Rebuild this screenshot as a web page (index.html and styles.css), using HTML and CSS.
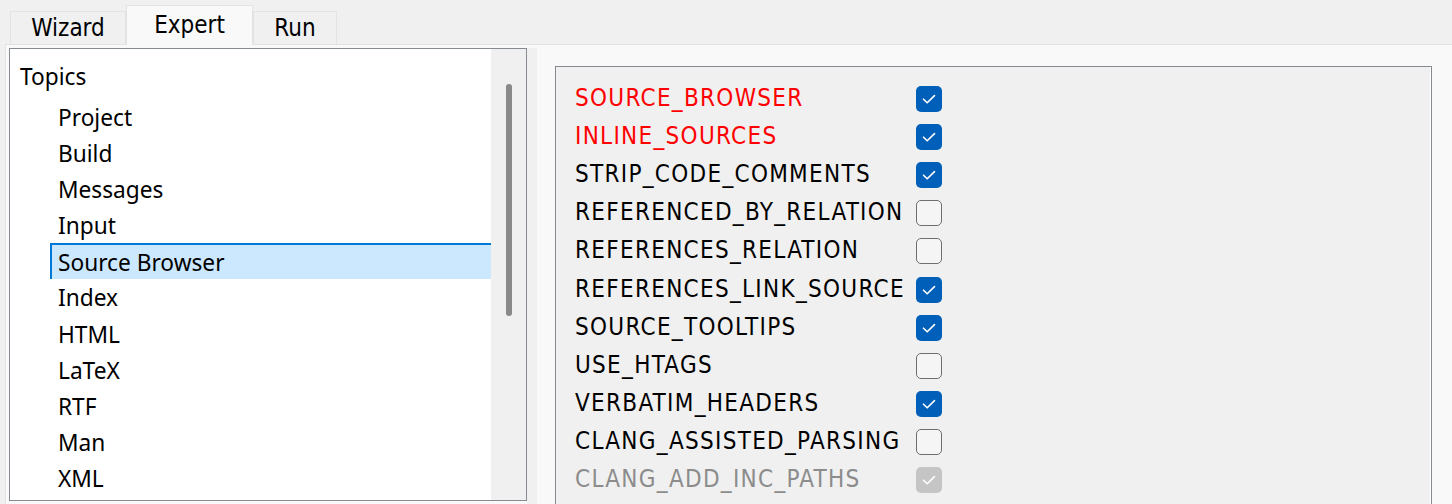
FILE: index.html
```html
<!DOCTYPE html>
<html>
<head>
<meta charset="utf-8">
<link rel="stylesheet" href="styles.css">
</head>
<body>
<div class="tabbar">
  <div class="tab">Wizard</div>
  <div class="tab active">Expert</div>
  <div class="tab">Run</div>
</div>
<div class="page">
  <div class="leftpane">
    <div class="listbox">
      <div class="list">
        <div class="topics">Topics</div>
        <div class="children">
          <div class="item">Project</div>
          <div class="item">Build</div>
          <div class="item">Messages</div>
          <div class="item">Input</div>
          <div class="item selected">Source Browser</div>
          <div class="item">Index</div>
          <div class="item">HTML</div>
          <div class="item">LaTeX</div>
          <div class="item">RTF</div>
          <div class="item">Man</div>
          <div class="item">XML</div>
        </div>
      </div>
      <div class="scrollbar"><div class="thumb"></div></div>
    </div>
    <div class="handle"></div>
  </div>
  <div class="rightpane">
    <div class="panel">
      <div class="opt red">SOURCE_BROWSER</div><div class="cb on"><svg viewBox="0 0 26 26"><path d="M7.5 13.2 L11.2 16.8 L18.5 9.6"/></svg></div>
      <div class="opt red">INLINE_SOURCES</div><div class="cb on"><svg viewBox="0 0 26 26"><path d="M7.5 13.2 L11.2 16.8 L18.5 9.6"/></svg></div>
      <div class="opt">STRIP_CODE_COMMENTS</div><div class="cb on"><svg viewBox="0 0 26 26"><path d="M7.5 13.2 L11.2 16.8 L18.5 9.6"/></svg></div>
      <div class="opt">REFERENCED_BY_RELATION</div><div class="cb off"></div>
      <div class="opt">REFERENCES_RELATION</div><div class="cb off"></div>
      <div class="opt">REFERENCES_LINK_SOURCE</div><div class="cb on"><svg viewBox="0 0 26 26"><path d="M7.5 13.2 L11.2 16.8 L18.5 9.6"/></svg></div>
      <div class="opt">SOURCE_TOOLTIPS</div><div class="cb on"><svg viewBox="0 0 26 26"><path d="M7.5 13.2 L11.2 16.8 L18.5 9.6"/></svg></div>
      <div class="opt">USE_HTAGS</div><div class="cb off"></div>
      <div class="opt">VERBATIM_HEADERS</div><div class="cb on"><svg viewBox="0 0 26 26"><path d="M7.5 13.2 L11.2 16.8 L18.5 9.6"/></svg></div>
      <div class="opt">CLANG_ASSISTED_PARSING</div><div class="cb off"></div>
      <div class="opt dis">CLANG_ADD_INC_PATHS</div><div class="cb disabled"><svg viewBox="0 0 26 26"><path d="M7.5 13.2 L11.2 16.8 L18.5 9.6"/></svg></div>
    </div>
  </div>
</div>
</body>
</html>
```
FILE: styles.css
```css
html, body {
  margin: 0;
  padding: 0;
  height: 504px;
  overflow: hidden;
  background: #f0f0f0;
}

.tabbar {
  display: flex;
  align-items: flex-end;
  height: 44px;
  padding-left: 10px;
  font-family: "DejaVu Sans Condensed", "DejaVu Sans", sans-serif;
  font-size: 24px;
  color: #000;
}

.tab {
  box-sizing: border-box;
  height: 33px;
  border: 1px solid #e3e3e3;
  border-bottom: none;
  background: #f0f0f0;
  display: flex;
  align-items: center;
  justify-content: center;
  line-height: 1;
}

.tab:nth-child(1) { width: 116px; }
.tab:nth-child(3) { width: 84px; }

.tab.active {
  width: 127px;
  height: 40px;
  margin-bottom: -1px;
  background: #f9f9f9;
  position: relative;
  z-index: 1;
  padding-bottom: 2px;
}

.page {
  margin-left: 5px;
  border-left: 1px solid #e3e3e3;
  border-top: 1px solid #e3e3e3;
  background: #f9f9f9;
  height: 470px;
  display: flex;
}

.leftpane {
  display: flex;
  padding: 3px 0 0 3px;
}

.listbox {
  box-sizing: border-box;
  width: 518px;
  height: 453px;
  border: 1px solid #868a91;
  background: #fff;
  display: flex;
}

.list {
  flex: 1;
  padding-top: 9px;
  font-family: "Noto Sans", "Open Sans", sans-serif;
  font-size: 22.7px;
  color: #000;
}

.topics {
  height: 36px;
  line-height: 37px;
  padding-left: 10px;
}

.children {
  margin-top: 5px;
  padding-left: 40px;
}

.item {
  box-sizing: border-box;
  height: 36.1px;
  line-height: 38px;
  padding-left: 8px;
}

.item.selected {
  background: #cce8ff;
  border-left: 2px solid #0078d4;
  border-top: 2px solid #0078d4;
  padding-left: 6px;
  line-height: 36px;
}

.scrollbar {
  width: 35px;
  background: #f0f0f0;
  padding-left: 15px;
  padding-top: 35px;
  box-sizing: border-box;
}

.thumb {
  width: 6px;
  height: 232px;
  border-radius: 3px;
  background: #898989;
}

.handle {
  width: 10px;
  background: #f0f0f0;
}

.rightpane {
  padding: 21px 0 0 18px;
}

.panel {
  box-sizing: border-box;
  width: 877px;
  height: 460px;
  border: 1px solid #868a91;
  box-shadow: inset -1px -1px 0 #fff;
  background: #f0f0f0;
  padding: 12px 0 0 19px;
  display: grid;
  grid-template-columns: 341px 26px;
  grid-auto-rows: 38.1px;
  align-items: center;
  font-family: "DejaVu Sans Condensed", "DejaVu Sans", sans-serif;
  font-size: 24px;
  letter-spacing: 1.3px;
  color: #000;
}

.opt { line-height: 1; white-space: nowrap; }
.opt.red { color: #ff0000; }
.opt.dis { color: #8c8c8c; }

.cb {
  box-sizing: border-box;
  width: 26px;
  height: 26px;
  border-radius: 5px;
  margin-top: 2px;
}

.cb svg {
  display: block;
  width: 26px;
  height: 26px;
}

.cb path {
  fill: none;
  stroke: #fff;
  stroke-width: 1.6;
  stroke-linecap: round;
  stroke-linejoin: round;
}

.cb.on { background: #005fb8; }
.cb.off {
  background: #f5f5f5;
  border: 1.5px solid #6e6e6e;
}
.cb.disabled { background: #c5c5c5; }
```
